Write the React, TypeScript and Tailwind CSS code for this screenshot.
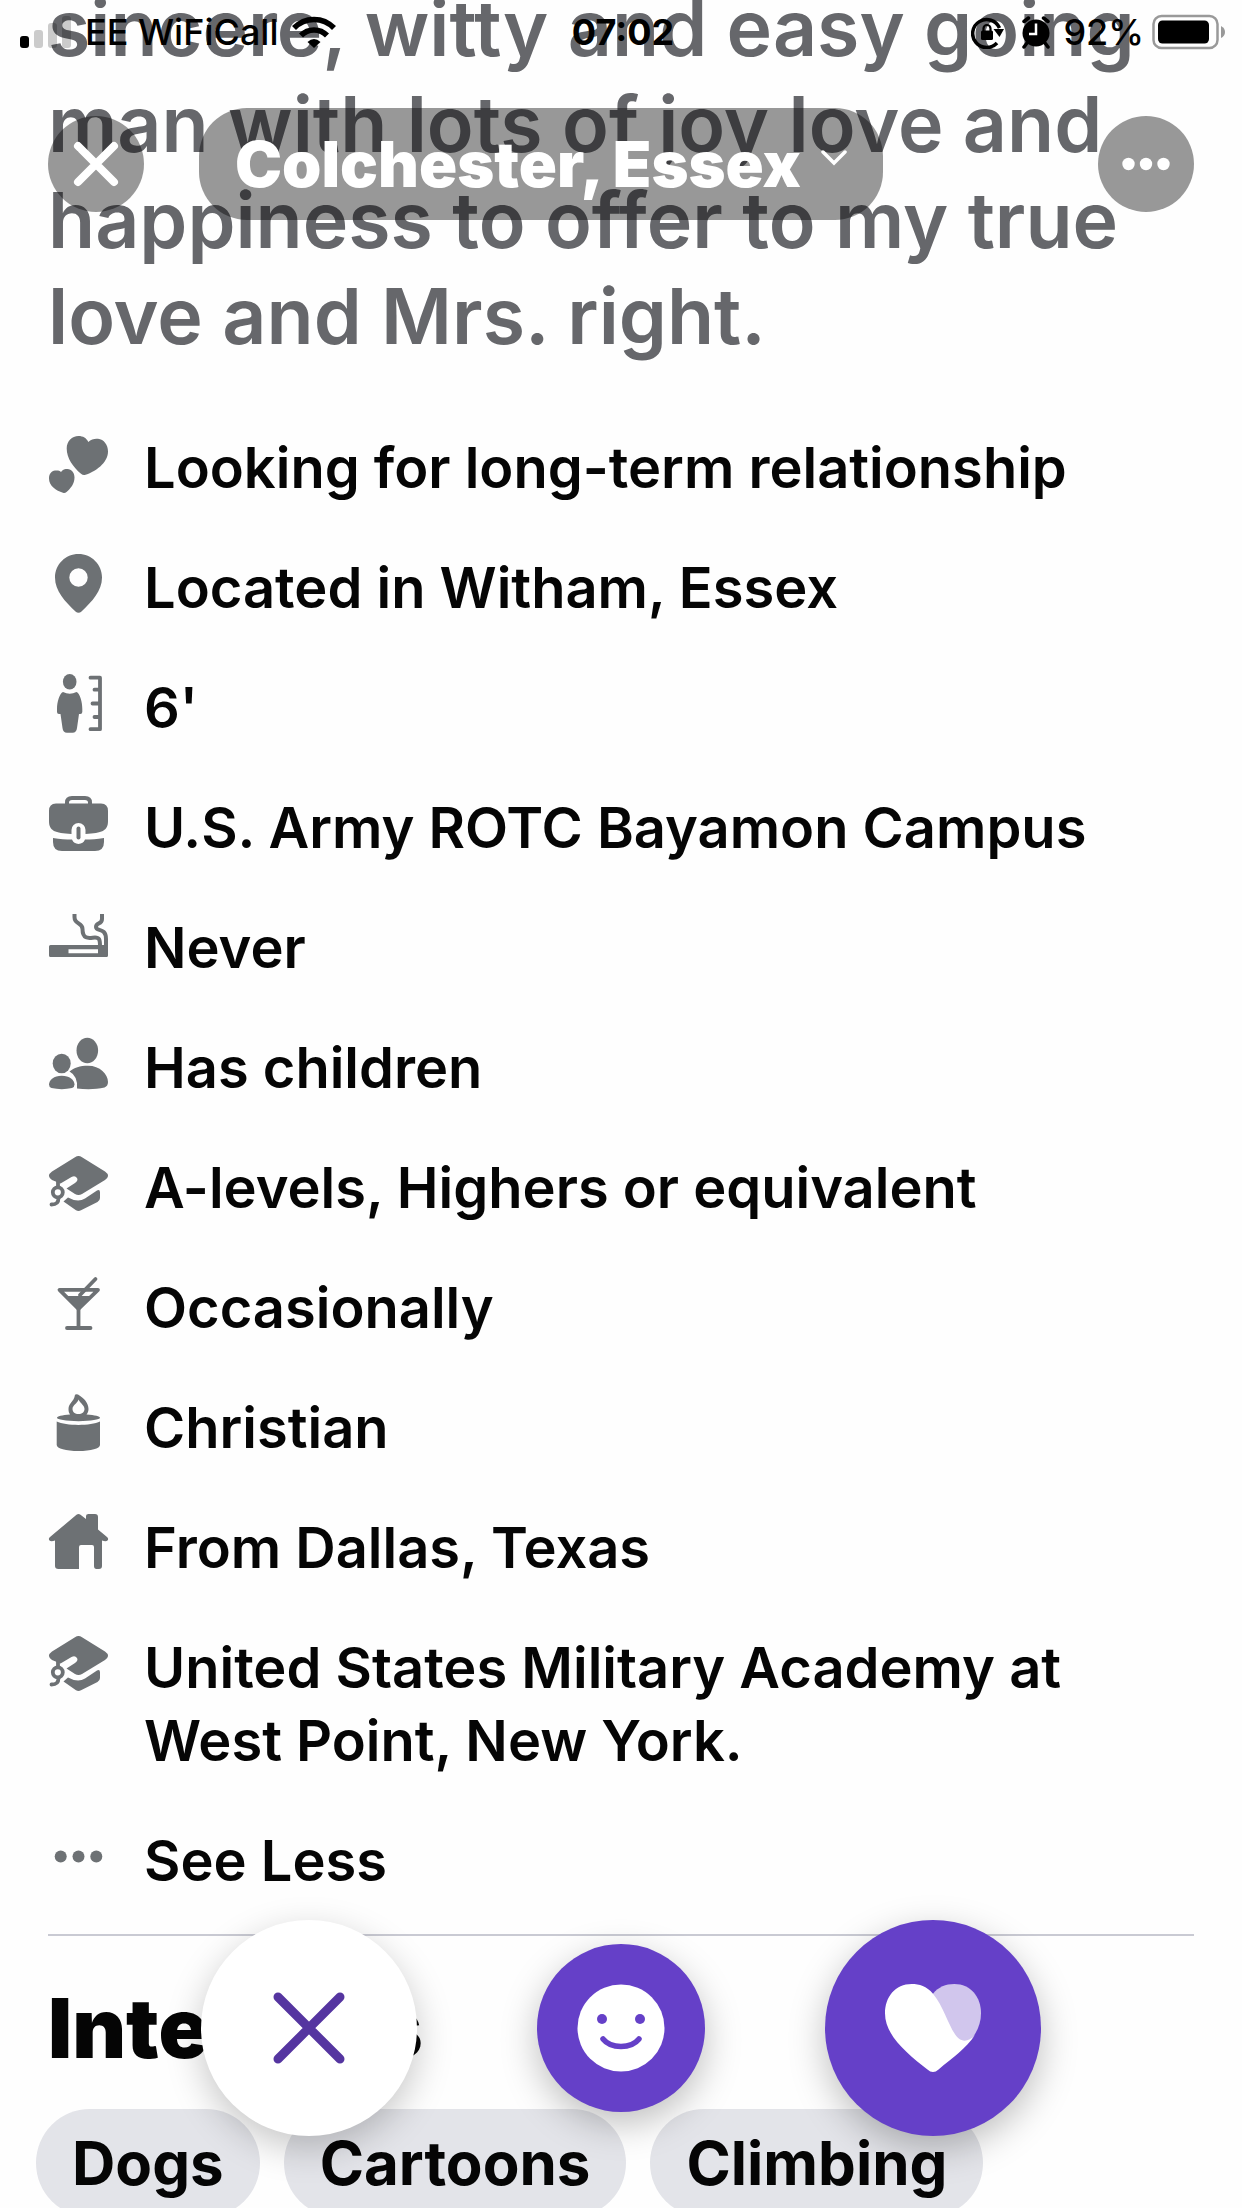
import type { ReactNode } from 'react';

const ICONS: Record<string, ReactNode> = {
  hearts: (
    <>
      <path d="M40.3 8C43 5 47 4.5 50 4.8C56 5.5 60 11 60 17.5C60 29 47 38 37.5 40.8Q35 41.5 33 39.8C25 33 18.7 24 18.7 14.5C18.7 7 24 2 30.5 2C35 2 38.5 4 40.3 8Z" />
      <path d="M13 38C14.5 35.5 17 35 19.5 35C23.5 35.3 26.5 38.5 26.5 43.5C26.5 50 22.5 54.5 18.5 58Q17 59.4 15 58.8C8 56.5 1 52 1 44.5C1 40 3.5 37 7 36.6C9.5 36.3 11.5 36.5 13 38Z" />
    </>
  ),
  pin: (
    <path
      fillRule="evenodd"
      d="M30.5 0C17.5 0 7 10.5 7 23.5C7 37 17 47.5 27.5 57.5Q30.5 60 33.5 57.5C44 47.5 54 37 54 23.5C54 10.5 43.5 0 30.5 0ZM30.5 14.3A9.2 9.2 0 1 1 30.5 32.7A9.2 9.2 0 1 1 30.5 14.3Z"
    />
  ),
  height: (
    <>
      <ellipse cx="21.7" cy="7.8" rx="6.8" ry="7.8" />
      <path d="M15 18Q21.7 21.5 28.5 18C32 19.5 34.3 28 34.3 35V38Q34.3 40 32.3 40H31L29 54Q28.5 58.7 24.5 58.7H19Q15 58.7 14.5 54L12.5 40H11Q9 40 9 38V35C9 28 11.5 19.5 15 18Z" />
      <path
        fill="none"
        stroke="currentColor"
        strokeWidth="3.8"
        strokeLinecap="round"
        strokeLinejoin="round"
        d="M42.5 3.7H52V55.2H42.5M52 15.7H46.5M52 29.5H44.5M52 43H46.5"
      />
    </>
  ),
  briefcase: (
    <>
      <path fill="none" stroke="currentColor" strokeWidth="4" d="M19 11V8.5Q19 4 24 4H37Q42 4 42 8.5V11" />
      <path d="M8 9.5H53Q60 9.5 60 17V27C60 37 54 39 37.5 40V36A7 7 0 0 0 23.5 36V40C7 39 1 37 1 27V17Q1 9.5 8 9.5Z" />
      <path d="M5 44C12 45 18 45.5 24 45.5A7 7 0 0 0 37 45.5C43 45.5 49 45 56 44V48Q56 57 47 57H14Q5 57 5 48Z" />
      <rect x="28.5" y="32.5" width="4" height="13" rx="2" />
    </>
  ),
  smoking: (
    <>
      <path fillRule="evenodd" d="M2.5 31H60V41.5Q60 43 58.5 43H2.5Q1 43 1 41.5V32.5Q1 31 2.5 31ZM20.5 35.3V39.3H50V35.3Z" />
      <g fill="none" stroke="currentColor" strokeWidth="4">
        <path d="M26.5 0V3C26.5 11 34.5 8 34.5 15C34.5 27 43 23.5 47 23.5C51 23.5 52 25 52 32" />
        <path d="M54 0V5C54 11 48 8 48 13C48 18 58 13 58 25V34" />
      </g>
    </>
  ),
  children: (
    <>
      <ellipse cx="39.3" cy="16.5" rx="10.8" ry="12.8" />
      <path d="M21.5 37.5C26 33.5 32 31.7 40 31.7C52 31.7 60 40 60 48Q60 52 56.5 53.5C48 55.5 38 55.5 29 54.5Q30 42 21.5 37.5Z" />
      <ellipse cx="13.7" cy="29.5" rx="9" ry="9.8" />
      <path d="M13.7 41.7C21.5 41.7 26.5 46 26.5 50.5Q26.5 53.2 24 54C17.5 55.5 10 55.5 3.5 54Q1 53.2 1 50.5C1 46 6 41.7 13.7 41.7Z" />
    </>
  ),
  cap: (
    <>
      <path d="M27 3.2Q30.5 1 34 3.2L57 17.5Q63 21.7 57 26L34 40Q30.5 42 27 40L18.5 34.5L27 29Q30.5 26.5 29 24Q27 21 23.5 23L12.5 29.5L4 26Q-2 21.7 4 17.5Z" />
      <path d="M15.5 47.5L20 43.5Q30 49 37 44.5L49 36.5Q52 35 52 38.5V44Q52 46.5 49.5 48L33 56.3Q30.5 57.5 28 56.3Z" />
      <g fill="none" stroke="currentColor" strokeWidth="3.8" strokeLinecap="round">
        <path d="M10 26V33" />
        <circle cx="9.8" cy="38.3" r="5" />
        <path d="M10.5 44C10.5 49 8 50.5 3.5 50.5" />
      </g>
    </>
  ),
  cocktail: (
    <g stroke="currentColor" strokeWidth="3.8" strokeLinecap="round" strokeLinejoin="round">
      <path fill="none" d="M11.5 15.8H50L31 34.5H30Z" />
      <path stroke="none" d="M17 22H44.5L31 36H30Z" />
      <path fill="none" d="M30.5 34V54M19 54H42.5M47.5 5L32 21" />
    </g>
  ),
  candle: (
    <>
      <path
        fillRule="evenodd"
        d="M27 .8Q28 -.3 30 .5C36 4 40.5 9 40.5 15C40.5 17.5 39.5 19.5 38.5 20.5C47 21 52 22.5 52 23.8C52 25.5 43 27.2 30.5 27.2S9 25.5 9 23.8C9 22.5 14 21 22 20.5C21 19 20.5 17.5 20.5 15C20.5 9 26 8 27 .8ZM30.5 5.5C29.5 9.5 24.5 11 24.5 15C24.5 18 27 20 30.5 20S36.5 18 36.5 15C36.5 11.5 32.5 9.5 30.5 5.5Z"
      />
      <path d="M8.7 27.5C18 32 43 32 52 27.5V51C52 54.5 43 57 30.5 57S8.7 54.5 8.7 51Z" />
    </>
  ),
  home: (
    <path d="M28.5 .8Q30.5 -.7 32.5 .8L38 5V2Q38 0 40.5 0H47Q50 0 50 3V15.5L59 23Q61 25 59.5 26.5Q58 28 54 26.5V52Q54 55 51 55H48.5Q46 55 46 52V33Q46 31 44 31H33Q31 31 31 33V55H10.5Q7 55 7 52V26.5Q3 28 1.5 26.5Q0 25 2 23Z" />
  ),
  more: (
    <>
      <circle cx="12.7" cy="29.5" r="6" />
      <circle cx="30.5" cy="29.5" r="6" />
      <circle cx="48.3" cy="29.5" r="6" />
    </>
  ),
};

const DETAILS = [
  { icon: 'hearts', text: 'Looking for long-term relationship' },
  { icon: 'pin', text: 'Located in Witham, Essex' },
  { icon: 'height', text: "6'" },
  { icon: 'briefcase', text: 'U.S. Army ROTC Bayamon Campus' },
  { icon: 'smoking', text: 'Never' },
  { icon: 'children', text: 'Has children' },
  { icon: 'cap', text: 'A-levels, Highers or equivalent' },
  { icon: 'cocktail', text: 'Occasionally' },
  { icon: 'candle', text: 'Christian' },
  { icon: 'home', text: 'From Dallas, Texas' },
  { icon: 'cap', text: 'United States Military Academy at West Point, New York.' },
];

const INTERESTS = ['Dogs', 'Cartoons', 'Climbing'];

function DetailIcon({ name }: { name: string }) {
  return (
    <svg viewBox="0 0 60 60" className="mt-0.5 size-15 shrink-0 overflow-visible text-[#6d7174]" fill="currentColor" aria-hidden="true">
      {ICONS[name]}
    </svg>
  );
}

function StatusBar() {
  return (
    <div className="grid grid-cols-[1fr_auto_1fr] items-center h-16 pl-5 pr-4 text-[36px] leading-none text-black">
      <div className="flex items-center gap-3.5">
        <svg width="51" height="32" viewBox="0 0 51 32" aria-hidden="true">
          <rect x="0" y="20" width="9" height="12" rx="3" />
          <g fillOpacity="0.2">
            <rect x="14" y="14" width="9" height="18" rx="3" />
            <rect x="28" y="7" width="9" height="25" rx="3" />
            <rect x="42" y="0" width="9" height="32" rx="3" />
          </g>
        </svg>
        <span className="font-medium whitespace-nowrap">EE WiFiCall</span>
        <svg width="44" height="32" viewBox="0 0 44 32" aria-hidden="true">
          <path fill="none" stroke="#000" strokeWidth="5.5" d="M2 12C13 .5 31 .5 42 12M9 19.5C16 12 28 12 35 19.5" />
          <path d="M15.5 26Q22 20 28.5 26L22 32Z" />
        </svg>
      </div>
      <span className="font-bold">07:02</span>
      <div className="flex items-center justify-end gap-2">
        <svg width="34" height="34" viewBox="0 0 34 34" className="mr-2" aria-hidden="true">
          <path fill="none" stroke="#000" strokeWidth="3.5" d="M26 28A14 14 0 1 1 28.5 13" />
          <path d="M22.5 14H33L28.5 22Z" />
          <rect x="10" y="15.5" width="12" height="9.5" rx="1.5" />
          <path fill="none" stroke="#000" strokeWidth="2.2" d="M12.5 16V13.5A3.5 3.5 0 0 1 19.5 13.5V16" />
        </svg>
        <svg width="30" height="34" viewBox="0 0 30 34" className="mr-1" aria-hidden="true">
          <circle cx="15" cy="18" r="13.5" />
          <path fill="none" stroke="#000" strokeWidth="3.5" strokeLinecap="round" d="M3 6.5L7.5 3M27 6.5L22.5 3M6 28L3 32M24 28L27 32" />
          <path fill="none" stroke="#fff" strokeWidth="2.5" d="M15 8.5V19H8" />
        </svg>
        <span className="font-medium">92%</span>
        <svg width="74" height="36" viewBox="0 0 74 36" aria-hidden="true">
          <rect x="1.5" y="2" width="64" height="32" rx="8" fill="none" stroke="#999" strokeWidth="2.5" />
          <rect x="6" y="6.5" width="51" height="23" rx="4.5" />
          <path fill="#999" d="M69 12Q73 14 73 18T69 24Z" />
        </svg>
      </div>
    </div>
  );
}

function TopBar() {
  return (
    <header className="absolute inset-x-0 top-0 z-10">
      <StatusBar />
      <div className="flex items-center justify-between mt-11 px-12 text-white">
        <button type="button" aria-label="Close" className="size-24 rounded-full bg-black/40 flex items-center justify-center">
          <svg width="46" height="46" viewBox="0 0 46 46" fill="none" stroke="currentColor" strokeWidth="8" strokeLinecap="round" aria-hidden="true">
            <path d="M5 5L41 41M41 5L5 41" />
          </svg>
        </button>
        <button
          type="button"
          className="h-28 mr-40 rounded-[48px] bg-black/40 px-9 flex items-center gap-5 text-[63px] leading-tight font-black whitespace-nowrap"
        >
          Colchester, Essex
          <svg width="26" height="16" viewBox="0 0 26 16" className="mb-3" fill="none" stroke="currentColor" strokeWidth="3.5" strokeLinecap="round" aria-hidden="true">
            <path d="M2 2L13 13L24 2" />
          </svg>
        </button>
        <button type="button" aria-label="More options" className="size-24 rounded-full bg-black/40 flex items-center justify-center">
          <svg width="48" height="14" viewBox="0 0 48 14" fill="currentColor" aria-hidden="true">
            <circle cx="6.5" cy="7" r="6.2" />
            <circle cx="24" cy="7" r="6.2" />
            <circle cx="41.5" cy="7" r="6.2" />
          </svg>
        </button>
      </div>
    </header>
  );
}

function Actions() {
  return (
    <div className="absolute inset-x-0 bottom-[72px] z-10 flex items-center justify-center gap-[120px]">
      <button type="button" aria-label="Pass" className="size-54 rounded-full bg-white shadow-[0_12px_36px_rgba(0,0,0,0.22)] flex items-center justify-center">
        <svg width="72" height="72" viewBox="0 0 72 72" fill="none" stroke="#5535a0" strokeWidth="9" strokeLinecap="round" aria-hidden="true">
          <path d="M5 5L67 67M67 5L5 67" />
        </svg>
      </button>
      <button type="button" aria-label="Send a smile" className="size-42 rounded-full bg-[#6540c8] shadow-[0_12px_36px_rgba(0,0,0,0.25)] flex items-center justify-center">
        <svg width="88" height="88" viewBox="0 0 88 88" aria-hidden="true">
          <circle cx="44" cy="44" r="43.5" fill="#fff" />
          <circle cx="25" cy="35" r="5" fill="#6540c8" />
          <circle cx="63" cy="35" r="5" fill="#6540c8" />
          <path fill="none" stroke="#6540c8" strokeWidth="5.5" strokeLinecap="round" d="M26 55C34 65 54 65 62 55" />
        </svg>
      </button>
      <button type="button" aria-label="Like" className="size-54 rounded-full bg-[#6540c8] shadow-[0_12px_36px_rgba(0,0,0,0.25)] flex items-center justify-center">
        <svg width="96" height="88" viewBox="0 0 95 87" aria-hidden="true">
          <path fill="#d1c6ed" d="M47.5 9.5C53 3 60 0 68.5 0C85 0 95 13 95 29C95 38 92 46 86 54Q80 60 74 58L46 20Z" />
          <path fill="#fff" d="M47.5 9.5C41 2 34 0 26.5 0C10 0 0 13 0 29C0 51 22 69 42 84.5Q47.5 89.5 53 84.5C67 73 80 64 89 50.5C84 56 78 58 73 54C64 46 59 23 47.5 9.5Z" />
        </svg>
      </button>
    </div>
  );
}

export default function App() {
  return (
    <div className="relative h-screen overflow-hidden bg-[#fefefe] text-[#050505] font-['Inter','Liberation_Sans',sans-serif]">
      <TopBar />

      <main className="px-12 -mt-5">
        <p className="text-[77px] leading-[96px] font-semibold text-[#66676b]">
          sincere, witty and easy going man with lots of joy love and happiness to offer to my true love and Mrs. right.
        </p>

        <ul className="flex flex-col gap-[47px] mt-[68px] text-[56px] leading-[73px] font-semibold">
          {DETAILS.map((item) => (
            <li key={item.text} className="flex items-start gap-9">
              <DetailIcon name={item.icon} />
              <span>{item.text}</span>
            </li>
          ))}
          <li>
            <button type="button" className="flex items-start gap-9">
              <DetailIcon name="more" />
              See Less
            </button>
          </li>
        </ul>

        <section className="mt-9 border-t-2 border-[#c9cad3] pt-11">
          <h2 className="text-[83px] leading-[97px] font-black">Interests</h2>
          <ul className="-mx-3 mt-8 flex gap-6 text-[60px] leading-none font-bold">
            {INTERESTS.map((name) => (
              <li key={name} className="flex h-27 items-center rounded-full bg-[#e3e4e9] px-9">
                {name}
              </li>
            ))}
          </ul>
        </section>
      </main>

      <Actions />
    </div>
  );
}
